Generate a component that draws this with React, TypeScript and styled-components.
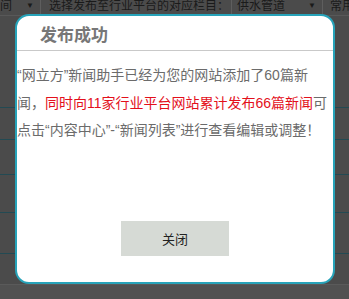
import React from 'react';
import styled, { createGlobalStyle } from 'styled-components';

const GlobalStyle = createGlobalStyle`
  html, body {
    margin: 0;
    padding: 0;
    background: #4b4b4b;
  }
  body {
    font-family: "Liberation Sans", "Noto Sans CJK SC", sans-serif;
  }
`;

// Page behind the mask
const Page = styled.div`
  position: relative;
  width: 349px;
  height: 299px;
  overflow: hidden;
  background: #4b4b4b;
`;

const FilterBar = styled.div`
  display: flex;
  align-items: flex-end;
  height: 15px;
  border-bottom: 1px solid #585858;
  font-size: 12px;
  line-height: 12px;
  color: #1a1a1a;
  overflow: hidden;
`;

const Cell = styled.div<{ $w: number; $pad?: number }>`
  display: flex;
  align-items: flex-end;
  justify-content: space-between;
  width: ${({ $w }) => $w}px;
  flex-shrink: 0;
  height: 100%;
  padding: 0 ${({ $pad }) => $pad ?? 0}px 3px 0;
  box-sizing: border-box;
  border-right: 1px solid #5e5e5e;
  white-space: nowrap;
  overflow: hidden;
`;

const CellText = styled.span<{ $indent?: number }>`
  padding-left: ${({ $indent }) => $indent ?? 0}px;
`;

const Caret = styled.span`
  font-size: 8px;
  line-height: 8px;
  margin-bottom: 2px;
`;

const Rows = styled.div`
  display: flex;
  flex-direction: column;
`;

const Row = styled.div<{ $h: number; $line?: string }>`
  height: ${({ $h }) => $h}px;
  border-bottom: 1px solid ${({ $line }) => $line ?? '#234a53'};
`;

const Footer = styled.div`
  height: 20px;
  background: #515151;
`;

// Dialog
const Dialog = styled.div`
  position: absolute;
  left: 15px;
  top: 14px;
  width: 320px;
  height: 270px;
  box-sizing: border-box;
  border: 2px solid #27a3b9;
  border-radius: 14px;
  background: #fff;
  display: flex;
  flex-direction: column;
  overflow: hidden;
`;

const Header = styled.div`
  height: 34px;
  display: flex;
  align-items: center;
  padding-left: 23px;
  border-bottom: 1px solid #c9c9c9;
`;

const Title = styled.h3`
  margin: 0;
  font-family: "Noto Sans CJK SC", sans-serif;
  font-size: 17px;
  font-weight: 700;
  color: #777;
`;

const Message = styled.p`
  flex: 1;
  margin: 11px 0 0;
  padding: 0;
  font-size: 14px;
  line-height: 27.5px;
  color: #6b6b6b;
  white-space: nowrap;
`;

const Highlight = styled.span`
  color: #e3101b;
`;

const Actions = styled.div`
  display: flex;
  justify-content: center;
  padding-bottom: 26px;
`;

const CloseButton = styled.button`
  width: 108px;
  height: 35px;
  border: none;
  background: #d6dad5;
  font-family: "Noto Sans CJK SC", sans-serif;
  font-size: 13px;
  color: #222;
  cursor: pointer;
`;

export default function App() {
  return (
    <>
      <GlobalStyle />
      <Page>
        <FilterBar>
          <Cell $w={41} $pad={6}>
            <CellText>间</CellText>
            <Caret>▼</Caret>
          </Cell>
          <Cell $w={191}>
            <CellText $indent={8}>选择发布至行业平台的对应栏目：</CellText>
          </Cell>
          <Cell $w={91} $pad={6}>
            <CellText $indent={5}>供水管道</CellText>
            <Caret>▼</Caret>
          </Cell>
          <Cell $w={30}>
            <CellText $indent={7}>常用</CellText>
          </Cell>
        </FilterBar>
        <Rows>
          <Row $h={91} />
          <Row $h={31} />
          <Row $h={34} />
          <Row $h={37} />
          <Row $h={40} />
          <Row $h={30} $line="#5a5a5a" />
        </Rows>
        <Footer />

        <Dialog>
          <Header>
            <Title>发布成功</Title>
          </Header>
          <Message>
            “网立方”新闻助手已经为您的网站添加了60篇新
            <br />
            闻，<Highlight>同时向11家行业平台网站累计发布66篇新闻</Highlight>可
            <br />
            点击“内容中心”-“新闻列表”进行查看编辑或调整！
          </Message>
          <Actions>
            <CloseButton>关闭</CloseButton>
          </Actions>
        </Dialog>
      </Page>
    </>
  );
}
